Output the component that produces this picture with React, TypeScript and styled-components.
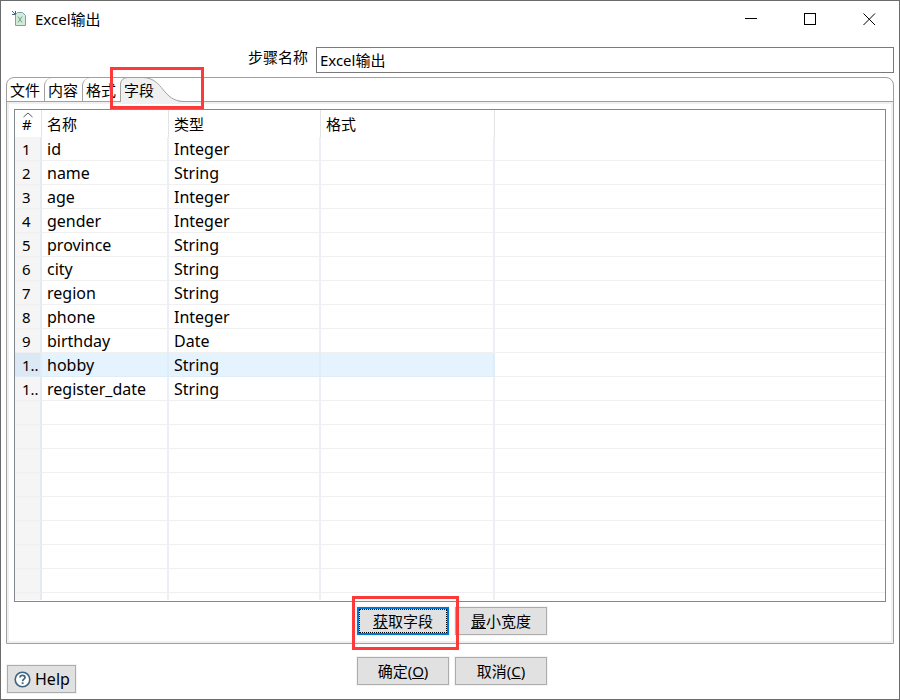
import React, { useState } from "react";
import styled, { createGlobalStyle } from "styled-components";

const GlobalStyle = createGlobalStyle`
  * { box-sizing: border-box; }
  body { margin: 0; background: #fff; }
  body, button, input, table {
    font-family: "Noto Sans", "Noto Sans CJK SC", sans-serif;
    font-size: 15px;
    line-height: 20px;
    color: #000;
  }
`;

const Dialog = styled.main`
  display: flex;
  flex-direction: column;
  min-height: 100vh;
  border: 1px solid #6b6b6b;
  background: #fff;
`;

const TitleBar = styled.header`
  display: flex;
  align-items: center;
  height: 36px;
  padding-left: 10px;
  gap: 8px;
`;

const Title = styled.h1`
  flex: 1;
  margin: 0;
  font-size: 15px;
  font-weight: 400;
`;

const WindowControls = styled.div`
  display: flex;
`;

const WindowButton = styled.button`
  display: flex;
  align-items: center;
  justify-content: center;
  width: 59px;
  height: 36px;
  padding: 0;
  border: 0;
  background: transparent;
`;

const Body = styled.form`
  display: flex;
  flex: 1;
  flex-direction: column;
  padding: 10px 5px 6px;
`;

const NameRow = styled.div`
  display: grid;
  grid-template-columns: 34% 1fr;
  column-gap: 8px;
`;

const NameLabel = styled.label`
  text-align: right;
`;

const NameInput = styled.input`
  width: 100%;
  height: 26px;
  padding: 0 3px 2px;
  border: 1px solid #7a7a7a;
  border-radius: 0;
  background: #fff;
  outline: 0;
`;

const Folder = styled.section`
  display: flex;
  flex: 1;
  flex-direction: column;
  margin-top: 4px;
  border: 1px solid #a0a0a0;
  border-radius: 8px 8px 0 0;
`;

const TabList = styled.div`
  display: flex;
  height: 24px;
  border-bottom: 1px solid #a0a0a0;
`;

const Tab = styled.button`
  width: 38px;
  height: 23px;
  padding: 0 3px;
  border: 0;
  border-left: 1px solid #a0a0a0;
  border-radius: 8px 0 0 0;
  background: transparent;
  white-space: nowrap;
  text-align: left;

  &:first-child {
    width: 37px;
    border-left: 0;
  }
`;

const ActiveTab = styled.button`
  position: relative;
  width: 66px;
  height: 24px;
  padding: 0 4px 1px;
  border: 0;
  background: transparent;
  text-align: left;
  outline: 0;
`;

const TabShape = styled.svg`
  position: absolute;
  inset: 0;
`;

const TabText = styled.span`
  position: relative;
`;

const Highlight = styled.span<{ $inset: string }>`
  position: absolute;
  z-index: 2;
  inset: ${(p) => p.$inset};
  border: 3px solid #fc3a3a;
  pointer-events: none;
`;

const TabPanel = styled.div`
  display: flex;
  flex: 1;
  flex-direction: column;
  padding: 5px 5px 6px;
  border: 2px solid #f0f0f0;
`;

const TableFrame = styled.div`
  flex: 1;
  padding-bottom: 1px;
  border: 1px solid #828790;
`;

const Table = styled.table`
  width: 100%;
  border-collapse: separate;
  border-spacing: 0;
  table-layout: fixed;
`;

const Col = styled.col<{ $width?: number }>`
  width: ${(p) => (p.$width ? `${p.$width}px` : "auto")};
`;

const HeadCell = styled.th`
  position: relative;
  height: 27px;
  padding: 0 0 0 5px;
  border-right: 1px solid #e3e3e3;
  font-weight: 400;
  text-align: left;

  &:first-child {
    padding-left: 7px;
  }
  &:last-child {
    border-right: 0;
  }
`;

const SortMark = styled.svg`
  position: absolute;
  top: 2px;
  left: 8px;
`;

const Cell = styled.td`
  padding: 2px 0 1px 5px;
  border-right: 2px solid #eceff6;
  border-bottom: 1px solid #f0f0f0;
  font-size: 16px;
  white-space: nowrap;
  overflow: hidden;

  &:first-child {
    padding-left: 7px;
    border-right-color: #e3eaf6;
    background: #f5f5f5;
    font-size: 15px;
  }
  &:last-child {
    border-right: 0;
  }
`;

const Row = styled.tr<{ $selected?: boolean }>`
  height: 24px;

  ${(p) =>
    p.$selected &&
    `
    ${Cell}:not(:last-child) {
      background: #e5f3ff;
      border-color: #dfedf9;
    }
    ${Cell}:first-child {
      background: #dbe9f5;
    }
  `}
`;

const TailRow = styled.tr`
  height: 7px;

  ${Cell} {
    padding: 0;
    border-bottom: 0;
  }
`;

const ButtonRow = styled.div`
  display: flex;
  justify-content: center;
  gap: 6px;
  padding-left: 4px;
`;

const PanelButtons = styled(ButtonRow)`
  margin-top: 5px;
`;

const ButtonHolder = styled.div`
  position: relative;
`;

const PushButton = styled.button<{ $focused?: boolean }>`
  min-width: 92px;
  height: 28px;
  padding: 0;
  border: ${(p) => (p.$focused ? "2px solid #0078d7" : "1px solid #adadad")};
  background: #e1e1e1;
  box-shadow: 0 0 0 1px #f3f3f3;
  outline: ${(p) => (p.$focused ? "1px dotted #000" : "0")};
  outline-offset: -3px;
`;

const Footer = styled.footer`
  display: grid;
  grid-template-columns: 1fr auto 1fr;
  align-items: start;
  margin-top: 13px;
  padding: 0 1px;
`;

const HelpButton = styled(PushButton)`
  display: flex;
  align-items: center;
  min-width: 0;
  gap: 4px;
  margin-top: 8px;
  padding: 0 5px 0 6px;
  justify-self: start;
  font-size: 16px;
`;

const fields = [
  ["1", "id", "Integer"],
  ["2", "name", "String"],
  ["3", "age", "Integer"],
  ["4", "gender", "Integer"],
  ["5", "province", "String"],
  ["6", "city", "String"],
  ["7", "region", "String"],
  ["8", "phone", "Integer"],
  ["9", "birthday", "Date"],
  ["1..", "hobby", "String"],
  ["1..", "register_date", "String"],
];

const emptyRows = Array.from({ length: 8 }, (_, i) => i);

function ExcelIcon() {
  return (
    <svg width="16" height="16" viewBox="0 0 16 16" fill="none" aria-hidden="true">
      <path d="M4.5 14.5V3.5L6.5 1.5H11.5L14.5 4.5V14.5Z" fill="#d3ecd8" stroke="#7f9fac" />
      <path d="M7 5.5L11 11.5M11 5.5L7 11.5" stroke="#6f9f98" />
      <path d="M1 0L4 3M4.5 0V3.5H1" stroke="#42677f" />
    </svg>
  );
}

function HelpIcon() {
  return (
    <svg width="17" height="17" viewBox="0 0 17 17" fill="none" aria-hidden="true">
      <circle cx="8.5" cy="8.5" r="7.3" fill="#fff" stroke="#3d6480" strokeWidth="1.6" />
      <path
        d="M6 6.6C6 3.7 11 3.8 11 6.5C11 8.2 8.6 8.2 8.6 10.2"
        stroke="#3d6480"
        strokeWidth="1.7"
      />
      <rect x="7.7" y="11.3" width="1.8" height="1.8" fill="#3d6480" />
    </svg>
  );
}

export default function App() {
  const [name, setName] = useState("Excel输出");

  return (
    <>
      <GlobalStyle />
      <Dialog>
        <TitleBar>
          <ExcelIcon />
          <Title>Excel输出</Title>
          <WindowControls>
            <WindowButton type="button" aria-label="最小化">
              <svg width="13" height="13" viewBox="0 0 13 13">
                <path d="M0 5.5H12" stroke="#000" />
              </svg>
            </WindowButton>
            <WindowButton type="button" aria-label="最大化">
              <svg width="13" height="13" viewBox="0 0 13 13" fill="none">
                <rect x="0.5" y="0.5" width="11" height="11" stroke="#000" />
              </svg>
            </WindowButton>
            <WindowButton type="button" aria-label="关闭">
              <svg width="13" height="13" viewBox="0 0 13 13">
                <path d="M0.5 0.5L12 12M12 0.5L0.5 12" stroke="#000" />
              </svg>
            </WindowButton>
          </WindowControls>
        </TitleBar>

        <Body onSubmit={(e) => e.preventDefault()}>
          <NameRow>
            <NameLabel htmlFor="step-name">步骤名称</NameLabel>
            <NameInput id="step-name" value={name} onChange={(e) => setName(e.target.value)} />
          </NameRow>

          <Folder>
            <TabList role="tablist">
              <Tab type="button" role="tab">文件</Tab>
              <Tab type="button" role="tab">内容</Tab>
              <Tab type="button" role="tab">格式</Tab>
              <ActiveTab type="button" role="tab" aria-selected="true">
                <TabShape width="66" height="24" viewBox="0 0 66 24" fill="none" aria-hidden="true">
                  <path d="M0 24V6Q1 0 7 0H24C42 0 42 23 62 23.5V24Z" fill="#f0f0f0" />
                  <path d="M0.5 24V6Q1 0.5 7 -0.5" stroke="#a0a0a0" />
                  <path d="M24 -0.5C44 1 42 23 64 23.5" stroke="#a0a0a0" />
                </TabShape>
                <TabText>字段</TabText>
                <Highlight $inset="-11px -18px -7px -10px" />
              </ActiveTab>
            </TabList>

            <TabPanel role="tabpanel">
              <TableFrame>
                <Table>
                  <colgroup>
                    <Col $width={27} />
                    <Col $width={127} />
                    <Col $width={152} />
                    <Col $width={174} />
                    <Col />
                  </colgroup>
                  <thead>
                    <tr>
                      <HeadCell scope="col">
                        <SortMark width="10" height="6" viewBox="0 0 10 6" fill="none" aria-hidden="true">
                          <path d="M0.5 5L5 1L9.5 5" stroke="#5a5a5a" />
                        </SortMark>
                        #
                      </HeadCell>
                      <HeadCell scope="col">名称</HeadCell>
                      <HeadCell scope="col">类型</HeadCell>
                      <HeadCell scope="col">格式</HeadCell>
                      <HeadCell />
                    </tr>
                  </thead>
                  <tbody>
                    {fields.map(([index, field, type]) => (
                      <Row key={field} $selected={field === "hobby"}>
                        <Cell>{index}</Cell>
                        <Cell>{field}</Cell>
                        <Cell>{type}</Cell>
                        <Cell />
                        <Cell />
                      </Row>
                    ))}
                    {emptyRows.map((i) => (
                      <Row key={i}>
                        <Cell />
                        <Cell />
                        <Cell />
                        <Cell />
                        <Cell />
                      </Row>
                    ))}
                    <TailRow>
                      <Cell />
                      <Cell />
                      <Cell />
                      <Cell />
                      <Cell />
                    </TailRow>
                  </tbody>
                </Table>
              </TableFrame>

              <PanelButtons>
                <ButtonHolder>
                  <PushButton type="button" $focused>
                    <u>获</u>取字段
                  </PushButton>
                  <Highlight $inset="-11px -10px -15px -5px" />
                </ButtonHolder>
                <PushButton type="button">
                  <u>最</u>小宽度
                </PushButton>
              </PanelButtons>
            </TabPanel>
          </Folder>

          <Footer>
            <HelpButton type="button">
              <HelpIcon />
              Help
            </HelpButton>
            <ButtonRow>
              <PushButton type="submit">
                确定(<u>O</u>)
              </PushButton>
              <PushButton type="button">
                取消(<u>C</u>)
              </PushButton>
            </ButtonRow>
          </Footer>
        </Body>
      </Dialog>
    </>
  );
}
